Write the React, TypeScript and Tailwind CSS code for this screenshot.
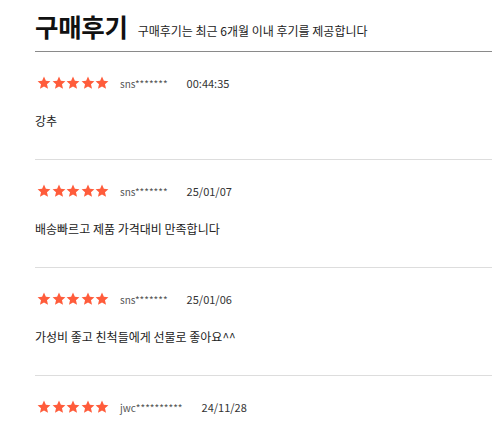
import React from "react";

const FONT = { fontFamily: '"Noto Sans CJK KR", "Noto Sans", sans-serif' };

const reviews = [
  { user: "sns*******", date: "00:44:35", text: "강추" },
  { user: "sns*******", date: "25/01/07", text: "배송빠르고 제품 가격대비 만족합니다" },
  { user: "sns*******", date: "25/01/06", text: "가성비 좋고 친척들에게 선물로 좋아요^^" },
  { user: "jwc**********", date: "24/11/28", text: "" },
];

function Star() {
  return (
    <svg viewBox="0 0 24 24" className="w-[14px] h-[14px]" fill="#ff5c3b">
      <path d="M12 1l3.2 7 7.8.8-5.9 5.2 1.8 7.8L12 17.9l-6.9 3.9 1.8-7.8L1 8.8 8.8 8z" />
    </svg>
  );
}

export default function App() {
  return (
    <div className="w-[492px] h-[426px] overflow-hidden bg-white pl-[35px]" style={FONT}>
      {/* header */}
      <div className="flex items-end gap-[10px] h-[52px] pb-[10px] border-b border-[#8a8a8a]">
        <h2 className="text-[25.5px] leading-[30px] font-bold text-[#111] tracking-[-0.3px]">구매후기</h2>
        <span className="text-[12px] leading-[20px] text-[#222]">구매후기는 최근 6개월 이내 후기를 제공합니다</span>
      </div>

      {reviews.map((r, i) => (
        <div key={i} className="pt-[23px] pb-[28px] border-b border-[#dddddd]">
          <div className="flex items-center h-[16px]">
            <div className="flex ml-[2px] gap-[0.5px]">
              {[0, 1, 2, 3, 4].map((s) => (
                <Star key={s} />
              ))}
            </div>
            <span className="ml-[11px] text-[10px] text-[#555]">{r.user}</span>
            <span className="ml-[19px] text-[11px] text-[#333]">{r.date}</span>
          </div>
          <p className="mt-[20px] h-[20px] text-[12px] leading-[20px] text-[#222]">{r.text}</p>
        </div>
      ))}
    </div>
  );
}
